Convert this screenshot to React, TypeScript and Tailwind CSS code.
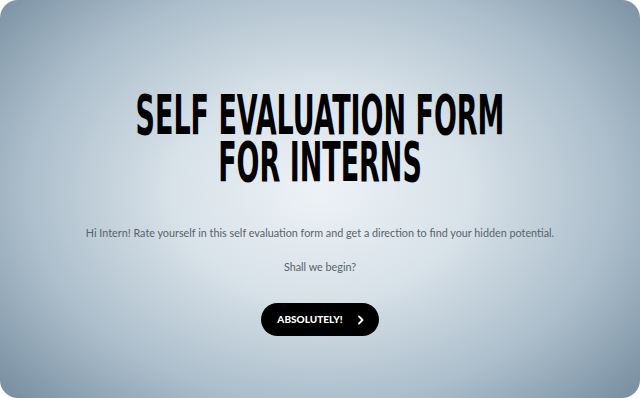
import React from "react";

export default function App() {
  return (
    <div className="w-[640px] h-[398px] bg-white">
      <div className="w-full h-full rounded-[18px] overflow-hidden bg-[radial-gradient(ellipse_65%_75%_at_50%_48%,#edf2f6_0%,#d8e2e9_35%,#adbfcc_70%,#7b92a4_100%)] flex flex-col items-center">
        <h1 className="mt-[92px] w-[800px] shrink-0 scale-x-[0.545] text-center text-black font-bold text-[55px] leading-[47px] whitespace-nowrap [font-family:'DejaVu_Sans_Condensed','DejaVu_Sans',sans-serif]">
          <div>SELF EVALUATION FORM</div>
          <div>FOR INTERNS</div>
        </h1>
        <p className="mt-[39px] text-[10.8px] text-[#59626b] [font-family:'Lato',sans-serif]">
          Hi Intern! Rate yourself in this self evaluation form and get a direction to find your hidden potential.
        </p>
        <p className="mt-[18px] text-[10.8px] text-[#59626b] [font-family:'Lato',sans-serif]">
          Shall we begin?
        </p>
        <button className="mt-[28px] w-[118px] h-[33px] rounded-full bg-black text-white flex items-center justify-center gap-[14px] pl-[2px]">
          <span className="text-[10px] font-black [font-family:'Lato',sans-serif]">ABSOLUTELY!</span>
          <svg width="8" height="10" viewBox="0 0 8 10" fill="none">
            <path d="M2 1.5 L5.5 5 L2 8.5" stroke="white" strokeWidth="1.8" strokeLinecap="round" strokeLinejoin="round" />
          </svg>
        </button>
      </div>
    </div>
  );
}
